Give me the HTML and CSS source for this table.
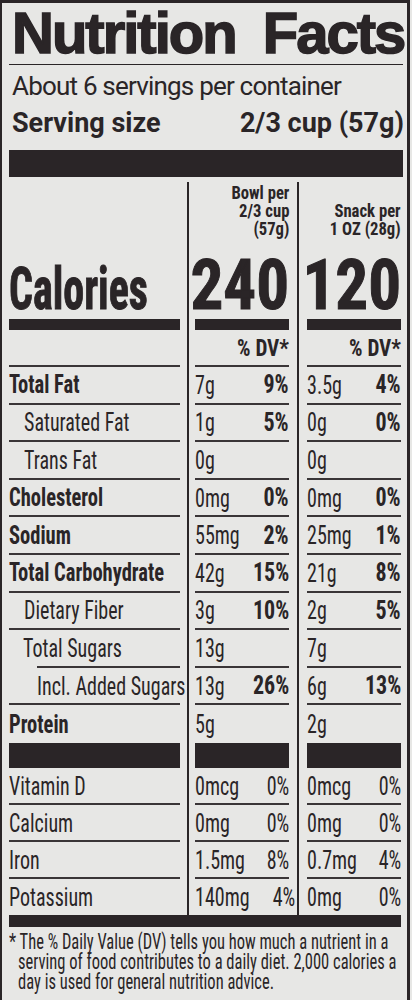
FILE: index.html
```html
<!DOCTYPE html>
<html lang="en">
<head>
  <meta charset="UTF-8">
  <meta name="viewport" content="width=412, initial-scale=1.0">
  <title>Nutrition Facts</title>
  <link rel="stylesheet" href="styles.css">
</head>
<body>
  <!-- Label box -->
  <div class="label">
    <h1 class="title">Nutrition Facts</h1>
    <p class="servings">About 6 servings per container</p>
    <div class="serving-size"><span>Serving size</span><span>2/3 cup (57g)</span></div>
    <div class="bar bar-top"></div>

    <!-- Dual column table -->
    <div class="facts">
      <div class="vline vline-1"></div>
      <div class="vline vline-2"></div>

      <div class="cell cal-cell"><span class="calories">Calories</span></div>
      <div class="cell cal-cell amount-head">
        <span class="per">Bowl per<br>2/3 cup<br>(57g)</span>
        <span class="kcal">240</span>
      </div>
      <div class="cell cal-cell amount-head">
        <span class="per">Snack per<br>1 OZ (28g)</span>
        <span class="kcal">120</span>
      </div>

      <div class="cell"></div>
      <div class="cell dv-head"><span class="pct bold">% DV*</span></div>
      <div class="cell dv-head"><span class="pct bold">% DV*</span></div>

      <div class="cell name main"><span>Total Fat</span></div>
      <div class="cell val"><span class="amt">7g</span><span class="pct bold">9%</span></div>
      <div class="cell val"><span class="amt">3.5g</span><span class="pct bold">4%</span></div>

      <div class="cell name sub"><span>Saturated Fat</span></div>
      <div class="cell val"><span class="amt">1g</span><span class="pct bold">5%</span></div>
      <div class="cell val"><span class="amt">0g</span><span class="pct bold">0%</span></div>

      <div class="cell name sub"><span>Trans Fat</span></div>
      <div class="cell val"><span class="amt">0g</span></div>
      <div class="cell val"><span class="amt">0g</span></div>

      <div class="cell name main"><span>Cholesterol</span></div>
      <div class="cell val"><span class="amt">0mg</span><span class="pct bold">0%</span></div>
      <div class="cell val"><span class="amt">0mg</span><span class="pct bold">0%</span></div>

      <div class="cell name main"><span>Sodium</span></div>
      <div class="cell val"><span class="amt">55mg</span><span class="pct bold">2%</span></div>
      <div class="cell val"><span class="amt">25mg</span><span class="pct bold">1%</span></div>

      <div class="cell name main"><span>Total Carbohydrate</span></div>
      <div class="cell val"><span class="amt">42g</span><span class="pct bold">15%</span></div>
      <div class="cell val"><span class="amt">21g</span><span class="pct bold">8%</span></div>

      <div class="cell name sub"><span>Dietary Fiber</span></div>
      <div class="cell val"><span class="amt">3g</span><span class="pct bold">10%</span></div>
      <div class="cell val"><span class="amt">2g</span><span class="pct bold">5%</span></div>

      <div class="cell name sugars"><span>Total Sugars</span></div>
      <div class="cell val"><span class="amt">13g</span></div>
      <div class="cell val"><span class="amt">7g</span></div>

      <div class="cell name added"><span>Incl. Added Sugars</span></div>
      <div class="cell val"><span class="amt">13g</span><span class="pct bold">26%</span></div>
      <div class="cell val"><span class="amt">6g</span><span class="pct bold">13%</span></div>

      <div class="cell name main protein"><span>Protein</span></div>
      <div class="cell val protein"><span class="amt">5g</span></div>
      <div class="cell val protein"><span class="amt">2g</span></div>

      <div class="cell name"><span>Vitamin D</span></div>
      <div class="cell val"><span class="amt">0mcg</span><span class="pct">0%</span></div>
      <div class="cell val"><span class="amt">0mcg</span><span class="pct">0%</span></div>

      <div class="cell name"><span>Calcium</span></div>
      <div class="cell val"><span class="amt">0mg</span><span class="pct">0%</span></div>
      <div class="cell val"><span class="amt">0mg</span><span class="pct">0%</span></div>

      <div class="cell name"><span>Iron</span></div>
      <div class="cell val"><span class="amt">1.5mg</span><span class="pct">8%</span></div>
      <div class="cell val"><span class="amt">0.7mg</span><span class="pct">4%</span></div>

      <div class="cell name last"><span>Potassium</span></div>
      <div class="cell val last"><span class="amt">140mg</span><span class="pct">4%</span></div>
      <div class="cell val last"><span class="amt">0mg</span><span class="pct">0%</span></div>
    </div>

    <div class="bar bar-end"></div>
    <p class="note">* The % Daily Value (DV) tells you how much a nutrient in a<br>serving of food contributes to a daily diet. 2,000 calories a<br>day is used for general nutrition advice.</p>
  </div>
</body>
</html>
```

FILE: styles.css
```css
/* Page: grey card stock background */
body {
  margin: 0;
  background: #e7e7e5;
  color: #2a2527;
  font-family: Roboto, "Liberation Sans", sans-serif;
}

/* Outer label box */
.label {
  width: 410px;
  min-height: 1000px;
  box-sizing: border-box;
  border-top: 3px solid #2a2527;
  border-left: 2px solid #2a2527;
  border-right: 3px solid #2a2527;
  padding: 0 6px 0 7px;
}

/* Title */
.title {
  margin: 0 -2px 0 0;
  padding: 1px 0 2px 3px;
  height: 62px;
  box-sizing: border-box;
  line-height: 58px;
  font-family: "Liberation Sans", Arial, sans-serif;
  font-size: 58px;
  font-weight: 700;
  letter-spacing: -2px;
  word-spacing: 13px;
  -webkit-text-stroke: 1.5px #2a2527;
  white-space: nowrap;
  border-bottom: 1.5px solid #2a2527;
}

.servings {
  margin: 6px 0 0 3px;
  font-size: 26px;
  line-height: 30px;
  letter-spacing: -0.8px;
  white-space: nowrap;
}

.serving-size {
  display: flex;
  justify-content: space-between;
  margin: 7px -3px 0 3px;
  font-size: 27px;
  font-weight: 700;
  line-height: 30px;
  white-space: nowrap;
}

/* Black rules */
.bar {
  background: #2a2527;
}
.bar-top {
  height: 27px;
  margin: 12px -2px 0 0;
}
.bar-end {
  height: 12px;
}

/* Table grid: label | rule | bowl | rule | snack */
.facts {
  display: grid;
  grid-template-columns: 171px 15px 94px 18px 94px;
  grid-template-rows: 153px 37px repeat(9, 37.6px) 63px repeat(3, 37px) 36px;
  font-family: "Roboto Condensed", "Liberation Sans", sans-serif;
}

.vline {
  grid-row: 1 / -1;
  justify-self: center;
  width: 2px;
  margin-top: 5px;
  background: #2a2527;
}
.vline-1 {
  grid-column: 2;
}
.vline-2 {
  grid-column: 4;
}

.cell {
  display: flex;
  align-items: center;
  justify-content: space-between;
  box-sizing: border-box;
  border-bottom: 2px solid #3a3537;
  font-size: 26px;
  line-height: 1;
  white-space: nowrap;
}

/* Condensed lettering: squeeze each text run */
.cell > span {
  display: inline-block;
  transform: scaleX(0.77);
  transform-origin: left center;
}
.cell > .pct {
  transform-origin: right center;
}
.cell > .bold {
  font-size: 25px;
  font-weight: 700;
  transform: scaleX(0.88);
}

/* Calories row */
.cal-cell {
  align-items: flex-end;
  border-bottom: 11px solid #2a2527;
}
.cell > .calories {
  font-size: 60px;
  font-weight: 700;
  line-height: 61px;
  transform: scaleX(0.7);
  transform-origin: left bottom;
  -webkit-text-stroke: 1px #2a2527;
}
.amount-head {
  flex-direction: column;
  align-items: flex-end;
  justify-content: flex-end;
}
.cell > .per {
  margin-bottom: 13px;
  text-align: right;
  font-size: 18.5px;
  font-weight: 700;
  line-height: 18px;
  transform: scaleX(0.9);
  transform-origin: right bottom;
}
.cell > .kcal {
  font-size: 70px;
  font-weight: 700;
  line-height: 68px;
  transform: scaleX(0.93);
  transform-origin: right bottom;
  -webkit-text-stroke: 1px #2a2527;
}

.dv-head {
  justify-content: flex-end;
}
.dv-head > .bold {
  font-size: 24px;
}

/* Nutrient names */
.name.main > span {
  font-size: 25px;
  font-weight: 700;
  transform: scaleX(0.82);
}
.name.sub {
  padding-left: 15px;
}
.sugars {
  margin-left: 28px;
}
.sugars > span {
  margin-left: -14px;
}
.added {
  padding-left: 28px;
}

.protein {
  border-bottom: 25px solid #2a2527;
}
.last {
  border-bottom: none;
}

/* Footnote */
.note {
  margin: 5px 0 0 0;
  padding-left: 12px;
  text-indent: -12px;
  font-family: "Roboto Condensed", "Liberation Sans", sans-serif;
  font-size: 22px;
  line-height: 20px;
  white-space: nowrap;
  transform: scaleX(0.75);
  transform-origin: left top;
}
```
